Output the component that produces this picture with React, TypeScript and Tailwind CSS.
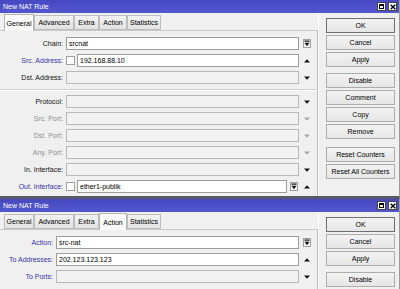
import React from "react";

type RowProps = {
  label: string;
  lc: string;
  lw: string;
  value?: string;
  white?: boolean;
  check?: boolean;
  combo?: boolean;
  side?: "combo" | "up" | "down" | "downGray" | "none";
};

function ComboBox() {
  return (
    <div className="w-[8px] h-[9px] border border-[#a0a0a0] bg-[#f4f4f4] flex items-center justify-center">
      <svg width="6" height="7" viewBox="0 0 6 7">
        <rect x="0.5" y="0.5" width="5" height="1.2" fill="#111" />
        <polygon points="0.5,2.8 5.5,2.8 3,6.2" fill="#111" />
      </svg>
    </div>
  );
}

function Arrow({ dir, gray }: { dir: "up" | "down"; gray?: boolean }) {
  const c = gray ? "#a8a8a8" : "#111";
  return (
    <svg width="6" height="4" viewBox="0 0 6 4">
      {dir === "up" ? (
        <polygon points="0,3.5 6,3.5 3,0.3" fill={c} />
      ) : (
        <polygon points="0,0.5 6,0.5 3,3.7" fill={c} />
      )}
    </svg>
  );
}

function Row({ label, lc, lw, value, white, check, combo, side = "none" }: RowProps) {
  return (
    <div className="flex items-center h-[17px]">
      <div className={`${lw} text-right whitespace-nowrap ${lc}`}>{label}</div>
      <div className="ml-[3px] flex-1 flex items-center min-w-0">
        {check && (
          <div className="w-[9px] h-[9px] border border-[#a0a0a0] bg-white mr-[2px] shrink-0" />
        )}
        <div
          className={`flex-1 h-[13px] border flex items-center px-[2px] text-black ${
            white ? "bg-white border-[#9d9d9d]" : "bg-[#f2f2f2] border-[#b8b8b8]"
          }`}
        >
          {value}
        </div>
        {combo && (
          <div className="ml-[3px] mr-[1px]">
            <ComboBox />
          </div>
        )}
      </div>
      <div className="ml-[2px] w-[11px] mr-[5px] flex items-center justify-center">
        {side === "combo" && <ComboBox />}
        {side === "up" && <Arrow dir="up" />}
        {side === "down" && <Arrow dir="down" />}
        {side === "downGray" && <Arrow dir="down" gray />}
      </div>
    </div>
  );
}

function TitleBar() {
  return (
    <div className="h-[13px] bg-[linear-gradient(#4649c2,#5357cc)] flex items-center text-white pl-[3px] shrink-0">
      <span>New NAT Rule</span>
      <div className="ml-auto mr-[2px] flex gap-[2px]">
        <div className="w-[9px] h-[9px] bg-white border border-[#444] flex items-center justify-center">
          <div className="w-[5px] h-[5px] border border-black border-t-2" />
        </div>
        <div className="w-[9px] h-[9px] bg-white border border-[#444] flex items-center justify-center">
          <svg width="6" height="6" viewBox="0 0 6 6">
            <path d="M0.7 0.7 L5.3 5.3 M5.3 0.7 L0.7 5.3" stroke="#000" strokeWidth="1.4" />
          </svg>
        </div>
      </div>
    </div>
  );
}

const TABS: [string, string][] = [
  ["General", "w-[30px]"],
  ["Advanced", "w-[40px]"],
  ["Extra", "w-[25px]"],
  ["Action", "w-[28px]"],
  ["Statistics", "w-[34px]"],
];

function Tabs({ active }: { active: string }) {
  return (
    <div className="h-[17px] flex items-end pl-[4px] shrink-0">
      {TABS.map(([t, w]) =>
        t === active ? (
          <div
            key={t}
            className={`${w} h-[17px] bg-[#fafafa] border border-b-0 border-[#b5b5b5] flex items-center justify-center text-black -mb-px relative z-10`}
          >
            {t}
          </div>
        ) : (
          <div
            key={t}
            className={`${w} h-[15px] bg-[linear-gradient(#f2f2f2,#e3e3e3)] border border-[#bdbdbd] flex items-center justify-center text-black`}
          >
            {t}
          </div>
        )
      )}
    </div>
  );
}

function Btn({ label, def, cls = "" }: { label: string; def?: boolean; cls?: string }) {
  return (
    <div
      className={`h-[15px] mb-[2px] flex items-center justify-center text-black bg-[linear-gradient(#f3f3f3,#e6e6e6)] border ${
        def ? "border-[#6e6e6e]" : "border-[#acacac]"
      } ${cls}`}
    >
      {label}
    </div>
  );
}

export default function App() {
  const lw1 = "w-[63px]";
  const lw2 = "w-[53px]";
  const blue = "text-[#3535a5]";
  const blk = "text-[#111]";
  const gry = "text-[#8e8e8e]";
  return (
    <div className="w-[400px] h-[289px] overflow-hidden bg-[#f0f0f0] font-['Liberation_Sans',Arial,sans-serif] text-[7px] leading-none">
      {/* Window 1 */}
      <div className="h-[199px] flex flex-col border-b-[3px] border-[#555a66] border-r border-r-[#9a9a9a] overflow-hidden">
        <TitleBar />
        <div className="flex flex-1 min-h-0">
          <div className="w-[318px] flex flex-col">
            <Tabs active="General" />
            <div className="flex-1 border-t border-[#c9c9c9] border-r border-r-[#bcbcbc] pt-[4px]">
              <Row label="Chain:" lc={blk} lw={lw1} value="srcnat" white side="combo" />
              <Row label="Src. Address:" lc={blue} lw={lw1} value="192.168.88.10" white check side="up" />
              <Row label="Dst. Address:" lc={blk} lw={lw1} side="down" />
              <div className="h-[7px] flex items-center">
                <div className="w-full h-[2px] border-t border-[#d0d0d0] border-b border-b-white" />
              </div>
              <Row label="Protocol:" lc={blk} lw={lw1} side="down" />
              <Row label="Src. Port:" lc={gry} lw={lw1} side="downGray" />
              <Row label="Dst. Port:" lc={gry} lw={lw1} side="downGray" />
              <Row label="Any. Port:" lc={gry} lw={lw1} side="downGray" />
              <Row label="In. Interface:" lc={blk} lw={lw1} side="down" />
              <Row label="Out. Interface:" lc={blue} lw={lw1} value="ether1-publik" white check combo side="up" />
            </div>
          </div>
          <div className="flex-1 flex flex-col pl-[7px] pr-[4px] pt-[5px] border-l border-white">
            <Btn label="OK" def />
            <Btn label="Cancel" />
            <Btn label="Apply" />
            <Btn label="Disable" cls="mt-[4px]" />
            <Btn label="Comment" />
            <Btn label="Copy" />
            <Btn label="Remove" />
            <Btn label="Reset Counters" cls="mt-[6px]" />
            <Btn label="Reset All Counters" />
          </div>
        </div>
      </div>
      {/* Window 2 */}
      <div className="h-[90px] flex flex-col border-r border-r-[#9a9a9a] overflow-hidden">
        <TitleBar />
        <div className="flex flex-1 min-h-0">
          <div className="w-[318px] flex flex-col">
            <Tabs active="Action" />
            <div className="flex-1 border-t border-[#c9c9c9] border-r border-r-[#bcbcbc] pt-[4px]">
              <Row label="Action:" lc={blue} lw={lw2} value="src-nat" white side="combo" />
              <Row label="To Addresses:" lc={blue} lw={lw2} value="202.123.123.123" white side="up" />
              <Row label="To Ports:" lc={blue} lw={lw2} side="down" />
            </div>
          </div>
          <div className="flex-1 flex flex-col pl-[7px] pr-[4px] pt-[5px] border-l border-white">
            <Btn label="OK" def />
            <Btn label="Cancel" />
            <Btn label="Apply" />
            <Btn label="Disable" cls="mt-[4px]" />
          </div>
        </div>
      </div>
    </div>
  );
}
